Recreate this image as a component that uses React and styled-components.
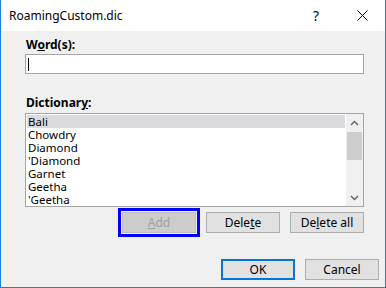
import React from "react";
import styled, { createGlobalStyle } from "styled-components";

const Global = createGlobalStyle`
  html, body { margin: 0; padding: 0; background: #fff; }
  body { font-family: "Segoe UI", "Noto Sans", sans-serif; }
`;

const Window = styled.div`
  width: 386px;
  height: 288px;
  box-sizing: border-box;
  border: 1px solid #1883d7;
  border-top: none;
  display: flex;
  flex-direction: column;
  background: #f0f0f0;
  font-size: 12px;
  color: #000;
`;

const TitleBar = styled.div`
  height: 31px;
  flex-shrink: 0;
  background: #fff;
  display: flex;
  align-items: center;
  padding-left: 8px;
`;

const Title = styled.div`
  flex: 1;
  line-height: 16px;
`;

const CaptionButton = styled.div`
  width: 46px;
  height: 31px;
  display: flex;
  align-items: center;
  justify-content: center;
  font-size: 14px;
`;

const Content = styled.div`
  display: flex;
  flex-direction: column;
  padding: 6px 21px 0 24px;
`;

const Label = styled.div`
  font-weight: 700;
  line-height: 16px;
  margin-top: ${(p) => p.$gap || 0}px;
  padding-left: 1px;
`;

const TextBox = styled.div`
  margin-top: 1px;
  height: 20px;
  box-sizing: border-box;
  border: 1px solid #a5a5a5;
  background: #fff;
  display: flex;
  padding: 3px 2px;
`;

const Caret = styled.div`
  width: 1px;
  height: 13px;
  background: #000;
`;

const ListBox = styled.div`
  margin-top: 2px;
  height: 94px;
  box-sizing: border-box;
  border: 1px solid #a5a5a5;
  background: #fff;
  display: flex;
`;

const List = styled.div`
  flex: 1;
  padding: 1px;
  overflow: hidden;
`;

const Row = styled.div`
  height: 13px;
  line-height: 13px;
  font-size: 11.5px;
  padding-left: 1px;
  white-space: nowrap;
  background: ${(p) => (p.$selected ? "#dadadf" : "transparent")};
`;

const ScrollBar = styled.div`
  width: 17px;
  background: #f0f0f0;
  display: flex;
  flex-direction: column;
`;

const ArrowButton = styled.div`
  height: 17px;
  display: flex;
  align-items: center;
  justify-content: center;
`;

const Thumb = styled.div`
  margin: 1px 1px 0;
  height: 28px;
  background: #cdcdcd;
`;

const Spacer = styled.div`
  flex: 1;
`;

const ButtonRow = styled.div`
  display: flex;
  justify-content: flex-end;
  gap: 10px;
  margin-top: 5px;
`;

const Button = styled.div`
  width: 74px;
  height: 21px;
  box-sizing: border-box;
  display: flex;
  align-items: center;
  justify-content: center;
  background: ${(p) => (p.$disabled ? "#cccccc" : "#e1e1e1")};
  color: ${(p) => (p.$disabled ? "#a0a0a0" : "#000")};
  border: ${(p) =>
    p.$default ? "2px solid #0078d7" : p.$disabled ? "1px solid #bfbfbf" : "1px solid #adadad"};
  outline: ${(p) => (p.$focus ? "3px solid #0000ff" : "none")};
  outline-offset: 1px;
  line-height: 16px;
`;

const Footer = styled.div`
  margin-top: auto;
  display: flex;
  justify-content: flex-end;
  gap: 10px;
  padding: 0 6px 7px 0;
`;

const Chevron = ({ up }) => (
  <svg width="9" height="6" viewBox="0 0 9 6">
    <path
      d={up ? "M1 5 L4.5 1.5 L8 5" : "M1 1 L4.5 4.5 L8 1"}
      fill="none"
      stroke="#606060"
      strokeWidth="1.4"
    />
  </svg>
);

const CloseIcon = () => (
  <svg width="11" height="11" viewBox="0 0 11 11">
    <path d="M0.5 0.5 L10.5 10.5 M10.5 0.5 L0.5 10.5" stroke="#000" strokeWidth="1" />
  </svg>
);

const words = ["Bali", "Chowdry", "Diamond", "'Diamond", "Garnet", "Geetha", "'Geetha"];

export default function App() {
  return (
    <>
      <Global />
      <Window>
        <TitleBar>
          <Title>RoamingCustom.dic</Title>
          <CaptionButton>?</CaptionButton>
          <CaptionButton>
            <CloseIcon />
          </CaptionButton>
        </TitleBar>
        <Content>
          <Label>
            W<u>o</u>rd(s):
          </Label>
          <TextBox>
            <Caret />
          </TextBox>
          <Label $gap={21}>
            Dictionar<u>y</u>:
          </Label>
          <ListBox>
            <List>
              {words.map((w, i) => (
                <Row key={w} $selected={i === 0}>
                  {w}
                </Row>
              ))}
            </List>
            <ScrollBar>
              <ArrowButton>
                <Chevron up />
              </ArrowButton>
              <Thumb />
              <Spacer />
              <ArrowButton>
                <Chevron />
              </ArrowButton>
            </ScrollBar>
          </ListBox>
          <ButtonRow>
            <Button $disabled $focus>
              <span>
                <u>A</u>dd
              </span>
            </Button>
            <Button>
              <span>
                Dele<u>t</u>e
              </span>
            </Button>
            <Button>
              <span>
                De<u>l</u>ete all
              </span>
            </Button>
          </ButtonRow>
        </Content>
        <Footer>
          <Button $default>OK</Button>
          <Button>Cancel</Button>
        </Footer>
      </Window>
    </>
  );
}
